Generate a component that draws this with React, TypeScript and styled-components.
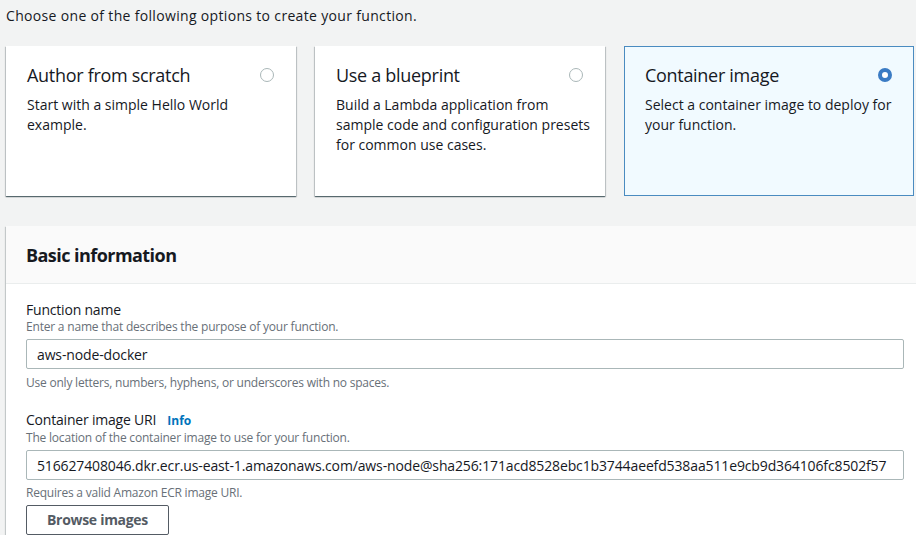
import React from "react";
import styled, { createGlobalStyle } from "styled-components";

const Global = createGlobalStyle`
  html, body { margin: 0; padding: 0; }
  body {
    background: #f2f3f3;
    font-family: "Open Sans", "Liberation Sans", sans-serif;
    color: #16191f;
    overflow: hidden;
    width: 916px;
    height: 535px;
  }
`;

const Page = styled.div`
  width: 930px;
  padding: 6px 0 0 6px;
  box-sizing: border-box;
  display: flex;
  flex-direction: column;
`;

const Intro = styled.p`
  margin: 0;
  font-size: 14px;
  line-height: 20px;
  letter-spacing: 0.33px;
  color: #16191f;
`;

const Tiles = styled.div`
  display: grid;
  grid-template-columns: repeat(3, 290px);
  column-gap: 19px;
  margin-top: 20px;
`;

const Tile = styled.div<{ $selected?: boolean }>`
  box-sizing: border-box;
  height: 150px;
  padding: 17px 20px 20px 20px;
  background: ${(p) => (p.$selected ? "#f1faff" : "#ffffff")};
  border: 1px solid ${(p) => (p.$selected ? "#4a8bc0" : "transparent")};
  box-shadow: ${(p) =>
    p.$selected
      ? "none"
      : "0 1px 1px 0 rgba(0,28,36,0.5), 1px 1px 1px 0 rgba(0,28,36,0.15), -1px 1px 1px 0 rgba(0,28,36,0.15)"};
`;

const TileHead = styled.div`
  display: flex;
  align-items: center;
  justify-content: space-between;
`;

const TileTitle = styled.div`
  font-size: 18px;
  line-height: 22px;
  letter-spacing: -0.3px;
  color: #16191f;
`;

const Radio = styled.span<{ $checked?: boolean }>`
  box-sizing: border-box;
  width: 14px;
  height: 14px;
  border-radius: 50%;
  margin-right: 1px;
  border: ${(p) => (p.$checked ? "4.5px solid #3b7bc4" : "1px solid #aab7b8")};
  background: #ffffff;
`;

const TileText = styled.p`
  margin: 9px -8px 0 0;
  font-size: 14px;
  line-height: 20px;
  color: #16191f;
`;

const Panel = styled.section`
  margin-top: 30px;
  background: #ffffff;
  box-shadow: 0 1px 1px 0 rgba(0,28,36,0.3), 1px 1px 1px 0 rgba(0,28,36,0.15), -1px 1px 1px 0 rgba(0,28,36,0.15);
`;

const PanelHeader = styled.header`
  background: #fafafa;
  border-bottom: 1px solid #eaeded;
  height: 58px;
  box-sizing: border-box;
  padding: 0 20px;
  display: flex;
  align-items: center;
`;

const PanelTitle = styled.h2`
  margin: 0;
  font-size: 18px;
  font-weight: 700;
  line-height: 22px;
  letter-spacing: -0.55px;
  color: #16191f;
`;

const PanelBody = styled.div`
  padding: 17px 20px 20px 20px;
  display: flex;
  flex-direction: column;
`;

const Field = styled.div<{ $gap?: number }>`
  display: flex;
  flex-direction: column;
  margin-top: ${(p) => p.$gap ?? 0}px;
`;

const Label = styled.div`
  display: flex;
  align-items: baseline;
  gap: 11px;
  font-size: 14px;
  line-height: 18px;
  letter-spacing: -0.2px;
  color: #16191f;
`;

const InfoLink = styled.a`
  font-size: 12px;
  font-weight: 700;
  letter-spacing: 0;
  color: #0073bb;
  text-decoration: none;
`;

const Description = styled.div`
  font-size: 12px;
  line-height: 16px;
  letter-spacing: -0.2px;
  color: #687078;
`;

const Input = styled.input`
  box-sizing: border-box;
  margin-top: 4px;
  width: 878px;
  height: 30px;
  border: 1px solid #aab7b8;
  border-radius: 2px;
  padding: 0 10px;
  font-family: inherit;
  font-size: 14px;
  letter-spacing: -0.13px;
  color: #16191f;
  background: #ffffff;
  outline: none;
`;

const Helper = styled.div<{ $tight?: boolean }>`
  margin-top: ${(p) => (p.$tight ? 5 : 6)}px;
  font-size: 12px;
  line-height: 16px;
  letter-spacing: -0.22px;
  color: #687078;
`;

const Button = styled.button`
  align-self: flex-start;
  margin-top: 4px;
  box-sizing: border-box;
  height: 30px;
  width: 143px;
  border: 1px solid #545b64;
  border-radius: 2px;
  background: #ffffff;
  font-family: inherit;
  font-size: 14px;
  font-weight: 700;
  letter-spacing: -0.3px;
  color: #545b64;
  padding: 0 0 1px 0;
`;

const tiles = [
  { title: "Author from scratch", text: "Start with a simple Hello World example." },
  { title: "Use a blueprint", text: "Build a Lambda application from sample code and configuration presets for common use cases." },
  { title: "Container image", text: "Select a container image to deploy for your function.", selected: true },
];

export default function App() {
  return (
    <>
      <Global />
      <Page>
        <Intro>Choose one of the following options to create your function.</Intro>
        <Tiles>
          {tiles.map((t) => (
            <Tile key={t.title} $selected={t.selected}>
              <TileHead>
                <TileTitle>{t.title}</TileTitle>
                <Radio $checked={t.selected} />
              </TileHead>
              <TileText>{t.text}</TileText>
            </Tile>
          ))}
        </Tiles>
        <Panel>
          <PanelHeader>
            <PanelTitle>Basic information</PanelTitle>
          </PanelHeader>
          <PanelBody>
            <Field>
              <Label>Function name</Label>
              <Description>Enter a name that describes the purpose of your function.</Description>
              <Input readOnly value="aws-node-docker" />
              <Helper>Use only letters, numbers, hyphens, or underscores with no spaces.</Helper>
            </Field>
            <Field $gap={20}>
              <Label>
                Container image URI <InfoLink href="#">Info</InfoLink>
              </Label>
              <Description>The location of the container image to use for your function.</Description>
              <Input
                readOnly
                value="516627408046.dkr.ecr.us-east-1.amazonaws.com/aws-node@sha256:171acd8528ebc1b3744aeefd538aa511e9cb9d364106fc8502f57"
              />
              <Helper $tight>Requires a valid Amazon ECR image URI.</Helper>
              <Button>Browse images</Button>
            </Field>
          </PanelBody>
        </Panel>
      </Page>
    </>
  );
}
